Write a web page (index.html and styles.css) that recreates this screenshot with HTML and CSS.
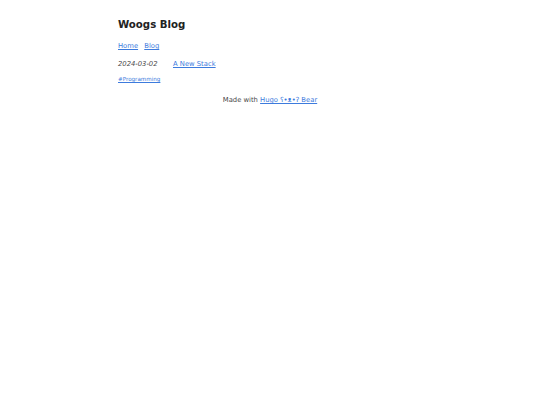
FILE: index.html
```html
<!DOCTYPE html>
<html>
<head>
<meta charset="utf-8">
<link rel="stylesheet" href="styles.css">
</head>
<body>
<div class="page">
  <header class="header">
    <a class="title" href="#"><h1>Woogs Blog</h1></a>
    <nav class="nav"><a href="#">Home</a> <a href="#">Blog</a></nav>
  </header>
  <main class="main">
    <ul class="posts">
      <li class="post"><span class="date">2024-03-02</span><a href="#">A New Stack</a></li>
    </ul>
    <div class="tags"><a href="#">#Programming</a></div>
  </main>
  <footer class="footer">Made with <a href="#">Hugo ʕ•ᴥ•ʔ Bear</a></footer>
</div>
</body>
</html>
```
FILE: styles.css
```css
html, body {
  margin: 0;
  padding: 0;
  background: #fff;
}
body {
  font-family: "DejaVu Sans", Verdana, sans-serif;
  font-size: 6.8px;
  color: #4a4a4a;
}
a {
  color: #3d7bdd;
}
.page {
  width: 304px;
  margin: 0 auto;
  padding-top: 17px;
}
.title {
  color: #222;
  text-decoration: none;
}
.title h1 {
  margin: 0;
  font-size: 10.2px;
  line-height: 16px;
  color: #222;
  font-weight: bold;
}
.nav {
  margin-top: 8px;
  line-height: 10px;
}
.nav a {
  margin-right: 4px;
}
.posts {
  list-style: none;
  margin: 8px 0 0;
  padding: 0;
}
.post {
  display: flex;
  line-height: 10px;
}
.date {
  flex: 0 0 55px;
  font-style: italic;
}
.tags {
  margin-top: 6px;
  line-height: 8px;
  font-size: 5.6px;
}
.footer {
  margin-top: 12px;
  text-align: center;
  line-height: 10px;
}
```
